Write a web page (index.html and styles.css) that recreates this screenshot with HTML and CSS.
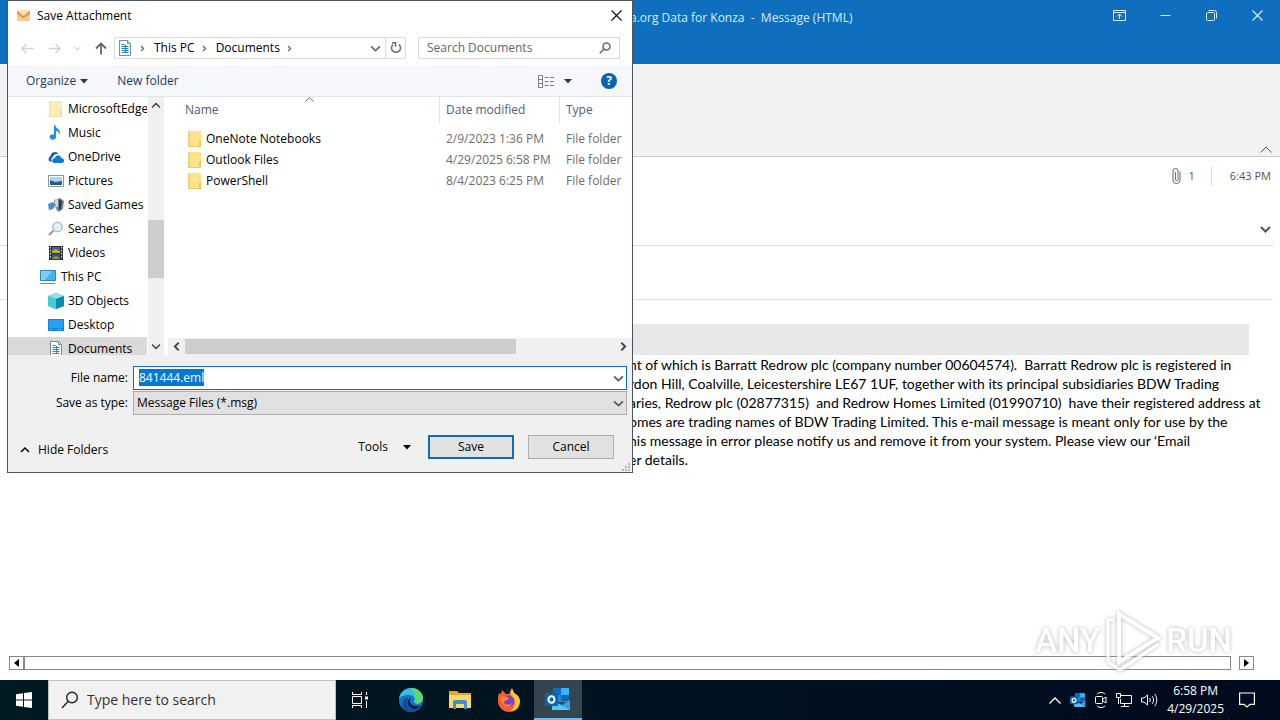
FILE: index.html
```html
<!DOCTYPE html>
<html lang="en">
<head>
<meta charset="utf-8">
<title>Save Attachment</title>
<link rel="stylesheet" href="styles.css">
</head>
<body class="desktop">
<svg class="defs" aria-hidden="true">
  <symbol id="folder" viewBox="0 0 16 16"><path d="M1 0h13v16H1z" fill="#ffe28c"/><path d="M1 0h2v16H1z" fill="#f5d27a"/><path d="M12 10l2-2v8h-2z" fill="#f0c75e"/><path d="M1 15h13v1H1z" fill="#ecc765"/></symbol>
  <symbol id="doc" viewBox="0 0 16 16"><path d="M2.500.5h8l3 3v12h-11z" fill="#fff" stroke="#7d8b96"/><path d="M10.500.5v3h3" fill="none" stroke="#7d8b96"/><path d="M4.500 4.500h3M4.500 6.500h7M4.500 8.500h7M4.500 10.500h7M4.500 12.500h7M8.500 5v8" stroke="#2587c9"/></symbol>
  <symbol id="down" viewBox="0 0 10 10"><path d="M1 3l4 4 4-4" fill="none" stroke="currentColor" stroke-width="1.500"/></symbol>
  <symbol id="up" viewBox="0 0 10 10"><path d="M1 7l4-4 4 4" fill="none" stroke="currentColor" stroke-width="1.500"/></symbol>
  <symbol id="left" viewBox="0 0 10 10"><path d="M7 1.500L3.500 5 7 8.500" fill="none" stroke="currentColor" stroke-width="1.800"/></symbol>
  <symbol id="right" viewBox="0 0 10 10"><path d="M3 1.500L6.500 5 3 8.500" fill="none" stroke="currentColor" stroke-width="1.800"/></symbol>
  <symbol id="caret" viewBox="0 0 10 10"><path d="M1 3h8L5 7.500z" fill="currentColor"/></symbol>
  <symbol id="outlook" viewBox="0 0 26 24"><path d="M8 1h16v14H8z" fill="#1490df"/><path d="M16 1h8v7h-8z" fill="#35b8f1"/><path d="M8 1h8v7H8z" fill="#0f6cbd"/><path d="M16 8h8v6h-8z" fill="#1066b5"/><path d="M7 14l10 4 8-5v10H7z" fill="#2ba5e6"/><path d="M7 13l18 10H7z" fill="#54c8f5"/><rect y="6" width="13" height="13" rx="1" fill="#0a64b4"/><ellipse cx="6.500" cy="12.500" rx="3" ry="3.300" fill="none" stroke="#fff" stroke-width="2"/></symbol>
</svg>

<main class="mail">
  <header class="mail-title">
    <h1 class="mail-subject">a.org Data for Konza&nbsp; -&nbsp; Message (HTML)</h1>
    <div class="window-buttons">
      <button class="window-button" aria-label="Ribbon display options"><svg width="13" height="11" viewBox="0 0 13 11" fill="none" stroke="#d5edff"><path d="M.5.5h12v10H.5zM.5 2.500h12M6.500 9V4M4 6.500L6.500 4 9 6.500"/></svg></button>
      <button class="window-button" aria-label="Minimize"><svg width="11" height="11" viewBox="0 0 11 11" stroke="#d5edff"><path d="M.5 5.500h10"/></svg></button>
      <button class="window-button" aria-label="Restore"><svg width="11" height="11" viewBox="0 0 11 11" fill="none" stroke="#d5edff"><rect x=".5" y="2.500" width="8" height="8" rx="1"/><path d="M2.500.5h6a2 2 0 012 2v6"/></svg></button>
      <button class="window-button" aria-label="Close window"><svg width="11" height="11" viewBox="0 0 11 11" stroke="#d5edff" stroke-width="1.200"><path d="M.5.5l10 10M10.500.5l-10 10"/></svg></button>
    </div>
  </header>
  <div class="ribbon"><button class="plain" aria-label="Collapse ribbon"><svg width="12" height="7" viewBox="0 0 12 7" fill="none" stroke="#555"><path d="M.5 6.500L6 1l5.500 5.500"/></svg></button></div>
  <section class="message-meta">
    <div class="meta-line">
      <svg width="9" height="16" viewBox="0 0 9 16" fill="none" stroke="#666"><path d="M8 3.500V12a3.500 3.500 0 01-7 0V3a2.500 2.500 0 015 0v8.500a1.300 1.300 0 01-2.600 0V4"/></svg>
      <span class="count">1</span><time class="time">6:43 PM</time>
    </div>
    <button class="plain" aria-label="Expand header"><svg width="11" height="8" viewBox="0 0 11 8" fill="none" stroke="#555" stroke-width="2"><path d="M1 1l4.500 4.500L10 1"/></svg></button>
  </section>
  <div class="attachment-strip"></div>
  <article class="message">
    <div class="banner"></div>
    <p class="message-text">nt of which is Barratt Redrow plc (company number 00604574).&nbsp; Barratt Redrow plc is registered in<br>rdon Hill, Coalville, Leicestershire LE67 1UF, together with its principal subsidiaries BDW Trading<br>aries, Redrow plc (02877315)&nbsp; and Redrow Homes Limited (01990710)&nbsp; have their registered address at<br>omes are trading names of BDW Trading Limited. This e-mail message is meant only for use by the<br>his message in error please notify us and remove it from your system. Please view our ‘Email<br>er details.</p>
  </article>
  <div class="mail-scroll">
    <button class="scroll-end" aria-label="Scroll left"><svg width="5" height="8" viewBox="0 0 5 8"><path d="M5 0v8L0 4z"/></svg></button>
    <div class="scroll-track"></div>
    <button class="scroll-end scroll-last" aria-label="Scroll right"><svg width="5" height="8" viewBox="0 0 5 8"><path d="M0 0v8l5-4z"/></svg></button>
  </div>
</main>

<div class="watermark" aria-label="ANY RUN">
  <span>ANY</span>
  <svg width="58" height="62" viewBox="0 0 58 62" fill="none" stroke="#fff" stroke-width="4"><path d="M15 4l39 24-39 24z"/><path d="M10 10H4v42l12 8 38-26" stroke-width="3"/></svg>
  <span>RUN</span>
</div>

<section class="dialog" role="dialog" aria-label="Save Attachment">
  <header class="dialog-title">
    <svg width="13" height="11" viewBox="0 0 13 11"><path d="M0 0h13v11H0z" fill="#f8cf92"/><path d="M0 1l6.500 5L13 1v3L6.500 8.500 0 4z" fill="#d99a55"/><path d="M0 0h13L6.500 5z" fill="#fbe0b4"/></svg>
    <h2 class="dialog-name">Save Attachment</h2>
    <button class="plain" aria-label="Close"><svg width="11" height="11" viewBox="0 0 11 11" stroke="#111" stroke-width="1.200"><path d="M.5.5l10 10M10.500.5l-10 10"/></svg></button>
  </header>

  <nav class="address-row">
    <div class="history">
      <button class="plain" aria-label="Back"><svg width="13" height="11" viewBox="0 0 13 11" fill="none" stroke="#d3d3d3" stroke-width="1.500"><path d="M12.500 5.500H1M5.500 1L1 5.500 5.500 10"/></svg></button>
      <button class="plain" aria-label="Forward"><svg width="13" height="11" viewBox="0 0 13 11" fill="none" stroke="#d3d3d3" stroke-width="1.500"><path d="M.5 5.500H12M7.500 1L12 5.500 7.500 10"/></svg></button>
      <button class="plain pale" aria-label="Recent locations"><svg width="7" height="7"><use href="#down"/></svg></button>
      <button class="plain" aria-label="Up one level"><svg width="12" height="13" viewBox="0 0 12 13" fill="none" stroke="#666" stroke-width="1.800"><path d="M6 12.500V1.500M1 6.500l5-5 5 5"/></svg></button>
    </div>
    <div class="address">
      <svg width="16" height="16"><use href="#doc"/></svg>
      <svg class="chevron" width="7" height="7"><use href="#right"/></svg>
      <a class="crumb" href="#">This PC</a>
      <svg class="chevron" width="7" height="7"><use href="#right"/></svg>
      <a class="crumb" href="#">Documents</a>
      <svg class="chevron" width="7" height="7"><use href="#right"/></svg>
      <button class="plain address-drop" aria-label="Previous locations"><svg width="11" height="11"><use href="#down"/></svg></button>
      <button class="refresh" aria-label="Refresh"><svg width="12" height="12" viewBox="0 0 12 12" fill="none" stroke="#666" stroke-width="1.500"><path d="M9 2.500A4.500 4.500 0 113 2.500M2 .8h3.500v4"/></svg></button>
    </div>
    <label class="search">
      <input class="search-input" type="text" placeholder="Search Documents" aria-label="Search Documents">
      <svg width="12" height="12" viewBox="0 0 12 12" fill="none" stroke="#666" stroke-width="1.500"><circle cx="7.500" cy="4.500" r="3.500"/><path d="M5 7L.8 11.200"/></svg>
    </label>
  </nav>

  <div class="toolbar">
    <button class="tool">Organize <svg width="10" height="10"><use href="#caret"/></svg></button>
    <button class="tool">New folder</button>
    <button class="tool view" aria-label="Change view"><svg width="17" height="13" viewBox="0 0 17 13" fill="none" stroke="#7b7f87"><path d="M.5.5h4v12h-4zM.5 4.500h4M.5 8.500h4M6.500 2.500h4M12 2.500h4M6.500 6.500h4M12 6.500h4M6.500 10.500h4M12 10.500h4"/></svg><svg width="10" height="10"><use href="#caret"/></svg></button>
    <button class="help" aria-label="Help">?</button>
  </div>

  <div class="panes">
    <ul class="tree">
      <li class="node"><svg class="faded" width="16" height="16"><use href="#folder"/></svg>MicrosoftEdge</li>
      <li class="node"><svg width="16" height="16" viewBox="0 0 16 16"><path d="M7 0c1 4 6 4 5 10-1-3-2-4-4-4v6a3.200 2.800 0 11-2-2.600V0z" fill="#1c8fe0"/></svg>Music</li>
      <li class="node"><svg width="16" height="16" viewBox="0 0 16 16"><path d="M1.500 12.500a3.500 3.500 0 011-5.500C3 2 9 2 11 5 7 4 5 7 5 8c-2 1-2 3-1 4.500z" fill="#0b63b5"/><path d="M6 14c-3-1-2-5 1-5 1-4 6-3 6 0 4 0 4 5 1 5z" fill="#1277cf"/></svg>OneDrive</li>
      <li class="node"><svg width="16" height="16" viewBox="0 0 16 16"><path d="M.5 2.500h15v11H.5z" fill="#fff" stroke="#8b959e"/><path d="M2 4h12v8H2z" fill="#a9d7f3"/><path d="M2 7l5 2 7-1v4H2z" fill="#285e87"/></svg>Pictures</li>
      <li class="node"><svg width="16" height="16" viewBox="0 0 16 16"><path d="M6 3l6-2 4 3-1 8-5 3-3-5z" fill="#7b858d"/><path d="M11 2l3 2-1 8-2 2z" fill="#30383f"/><path d="M7 3l3-1v7l-3 2z" fill="#d3dade"/><path d="M0 7l5-2 3 3-3 4-4 1z" fill="#4a8fc0"/></svg>Saved Games</li>
      <li class="node"><svg width="16" height="16" viewBox="0 0 16 16"><path d="M5.500 9.500L1 14" stroke="#9a938e" stroke-width="2"/><circle cx="9.500" cy="6" r="4.800" fill="#d7effc" stroke="#8daabd"/><path d="M7 5c1-2 3-2 4-1" fill="none" stroke="#fff"/></svg>Searches</li>
      <li class="node"><svg width="16" height="16" viewBox="0 0 16 16"><path d="M1 1h14v14H1z" fill="#333"/><path d="M4 2h8v5H4z" fill="#4858a5"/><path d="M4 9h8v5H4z" fill="#3c4b90"/><path d="M4 6l3-2 5 2v2H4z" fill="#a5b626"/><path d="M4 13l4-2 4 2v1H4z" fill="#8a9e2b"/><path d="M2.500 2v12M13.500 2v12" stroke="#ddd" stroke-dasharray="1.500"/></svg>Videos</li>
      <li class="node root"><svg width="18" height="16" viewBox="0 0 18 16"><path d="M1.500 1.500h15v10h-15z" fill="#42b4ef" stroke="#2a86bd"/><path d="M2 2h11L6 11H2z" fill="#76d0fa"/><path d="M1 14.500h15" stroke="#8b8b8b"/></svg>This PC</li>
      <li class="node"><svg width="16" height="16" viewBox="0 0 16 16"><path d="M8 0l8 3v10l-8 3-8-3V3z" fill="#1fb0c4"/><path d="M8 0l8 3-8 3-8-3z" fill="#8be6ec"/><path d="M0 3l8 3v10l-8-3z" fill="#45cbd8"/><path d="M8 6l8-3v10l-8 3z" fill="#0f8da8"/></svg>3D Objects</li>
      <li class="node"><svg width="16" height="16" viewBox="0 0 16 16"><path d="M0 2h16v12H0z" fill="#1583d8"/><path d="M1 3h14v8H1z" fill="#23a0f2"/><path d="M2 12.500h2M10 12.500h4" stroke="#bde4ff" stroke-dasharray="1"/></svg>Desktop</li>
      <li class="node selected"><svg width="16" height="16"><use href="#doc"/></svg>Documents</li>
    </ul>
    <div class="vscroll"><svg width="10" height="11"><use href="#up"/></svg><div class="vtrack"><div class="vthumb"></div></div><svg width="10" height="11"><use href="#down"/></svg></div>
    <div class="files">
      <table class="file-table">
        <colgroup><col><col class="col-date"><col class="col-type"></colgroup>
        <thead><tr><th>Name<svg class="sort" width="9" height="5" viewBox="0 0 9 5" fill="none" stroke="#777"><path d="M.5 4.500l4-4 4 4"/></svg></th><th>Date modified</th><th>Type</th></tr></thead>
        <tbody>
          <tr><td><span class="file"><svg width="16" height="16"><use href="#folder"/></svg>OneNote Notebooks</span></td><td>2/9/2023 1:36 PM</td><td>File folder</td></tr>
          <tr><td><span class="file"><svg width="16" height="16"><use href="#folder"/></svg>Outlook Files</span></td><td>4/29/2025 6:58 PM</td><td>File folder</td></tr>
          <tr><td><span class="file"><svg width="16" height="16"><use href="#folder"/></svg>PowerShell</span></td><td>8/4/2023 6:25 PM</td><td>File folder</td></tr>
        </tbody>
      </table>
      <div class="hscroll"><svg width="11" height="11"><use href="#left"/></svg><div class="htrack"><div class="hthumb"></div></div><svg width="11" height="11"><use href="#right"/></svg></div>
    </div>
  </div>

  <form class="dialog-form">
    <label class="field-label" for="filename">File name:</label>
    <div class="field"><input class="field-input" id="filename" type="text" value="841444.eml"><svg class="field-arrow" width="11" height="11"><use href="#down"/></svg></div>
    <label class="field-label" for="filetype">Save as type:</label>
    <div class="field"><select class="field-select" id="filetype"><option>Message Files (*.msg)</option></select><svg class="field-arrow" width="11" height="11"><use href="#down"/></svg></div>
  </form>
  <footer class="actions">
    <button class="hide-folders"><svg width="10" height="10"><use href="#up"/></svg>Hide Folders</button>
    <button class="tools">Tools <svg width="10" height="10"><use href="#caret"/></svg></button>
    <button class="push primary">Save</button>
    <button class="push">Cancel</button>
  </footer>
  <svg class="grip" width="10" height="10" viewBox="0 0 10 10" fill="#b5b5b5"><path d="M7 1h2v2H7zM4 4h2v2H4zM7 4h2v2H7zM1 7h2v2H1zM4 7h2v2H4zM7 7h2v2H7z"/></svg>
</section>

<footer class="taskbar">
  <button class="start" aria-label="Start"><svg width="16" height="16" viewBox="0 0 16 16" fill="#fff"><path d="M0 2.200l7-1v6.300H0zM8 1l8-1v7.500H8zM0 8.500h7v6.300l-7-1zM8 8.500h8V16l-8-1z"/></svg></button>
  <label class="task-search"><svg width="18" height="18" viewBox="0 0 18 18" fill="none" stroke="#222" stroke-width="1.400"><circle cx="11" cy="6.500" r="5.300"/><path d="M7 10.500L1 17"/></svg><input class="task-input" type="text" placeholder="Type here to search" aria-label="Type here to search"></label>
  <button class="task" aria-label="Task view"><svg width="18" height="16" viewBox="0 0 18 16" fill="none" stroke="#fff"><path d="M1.500 0v2.500h9V0M1.500 16v-2.500h9V16M1.500 4.500h9v7h-9zM15.500 0v3M15.500 9v7"/><path d="M14 4.500h3v3h-3z" fill="#fff" stroke="none"/></svg></button>
  <div class="pinned">
    <button class="task" aria-label="Edge"><svg width="24" height="24" viewBox="0 0 24 24"><circle cx="12" cy="12" r="12" fill="#1672c9"/><path d="M0 11C1 4 6 0 12 0c7 0 12 5 12 10 0 6-7 7-9 4 2-4-1-7-5-7-5 0-9 2-10 4z" fill="#35bce0"/><path d="M12 0c7 0 12 5 12 10 0 6-7 7-9 4 3-5 0-9-3-14z" fill="#5bd675"/><path d="M8 15c0 4 4 7 9 6 2 0 4-1 5-2-3 5-10 6-15 4-5-3-5-12 3-14-2 2-2 4-2 6z" fill="#0c4e9e"/><path d="M12 10c-3 3 0 8 5 8 2 0 4 0 5-1-2 4-7 5-10 3-5-3-4-9 0-10z" fill="#081e3b"/></svg></button>
    <button class="task" aria-label="File Explorer"><svg width="22" height="20" viewBox="0 0 22 20"><path d="M0 1h8l2 2h12v15H0z" fill="#e9a52a"/><path d="M0 5h22v13H0z" fill="#ffd966"/><path d="M4 12a2 2 0 012-2h10a2 2 0 012 2v7h-3v-5H7v5H4z" fill="#3d91cf"/></svg></button>
    <button class="task" aria-label="Firefox"><svg width="24" height="24" viewBox="0 0 24 24"><path d="M2 5l2 1 1-4 4 4 3 0c1-2 2-4 3-5l2 4c4 2 6 5 6 9 0 6-5 10-11 10S1 19 1 13c0-3 0-6 1-8z" fill="#ff5a36"/><path d="M15 0l2 5c6 3 7 8 5 12-1 4-5 6-9 6 5-3 7-9 2-14-2-3-2-6 0-9z" fill="#ffc928"/><circle cx="12" cy="13" r="5.500" fill="#7a3fd4"/><path d="M4 9c3-2 5 0 8 1-1 3-5 2-5 4 0 3 5 4 8 1-1 5-10 6-11-6z" fill="#ff8c1f"/></svg></button>
    <button class="task active" aria-label="Outlook"><svg width="26" height="24"><use href="#outlook"/></svg></button>
  </div>
  <div class="tray">
    <svg width="12" height="7" viewBox="0 0 12 7" fill="none" stroke="#fff" stroke-width="1.300"><path d="M.5 6.500L6 1l5.500 5.500"/></svg>
    <svg width="16" height="16"><use href="#outlook"/></svg>
    <svg width="12" height="16" viewBox="0 0 12 16" fill="none" stroke="#fff"><rect x=".5" y="4.500" width="7" height="7" rx="1"/><path d="M8 7l3-2v6L8 9M2 2c2-2 6-2 8 0M2 14c2 2 6 2 8 0"/></svg>
    <svg width="16" height="14" viewBox="0 0 16 14" fill="none" stroke="#fff"><path d="M5 2.500h10.500v8h-11V6M8.500 11v2.500M5 13.500h8M.5.5h4v4h-4zM2.500 5v6"/></svg>
    <svg width="17" height="14" viewBox="0 0 17 14" fill="none" stroke="#fff"><path d="M.5 5h2.500L6.500 2v10L3 9H.5zM8.500 5c1 1 1 3 0 4M11 3c2 2 2 6 0 8M13.500 1c3 3 3 9 0 12"/></svg>
    <div class="clock"><time>6:58 PM</time><time>4/29/2025</time></div>
    <svg width="16" height="16" viewBox="0 0 16 16" fill="none" stroke="#fff" stroke-width="1.200"><path d="M.6 1h14.800v11.400H11L8 15l-3-2.600H.6z"/></svg>
  </div>
</footer>
<script>
  document.getElementById("filename").focus();
  document.getElementById("filename").select();
</script>
</body>
</html>
```
FILE: styles.css
```css
* { box-sizing: border-box; }
body, h1, h2, p, ul { margin: 0; padding: 0; }
button, input, select { font: inherit; color: inherit; }
button { padding: 0; border: 0; background: none; }
svg { display: block; flex: none; }
.defs { position: absolute; width: 0; height: 0; }

.desktop {
  display: flex;
  flex-direction: column;
  height: 100vh;
  overflow: hidden;
  position: relative;
  font: 12px/16px "Open Sans", "Noto Sans", sans-serif;
  color: #000;
  background: #fff;
}
.plain { display: flex; align-items: center; justify-content: center; }

/* Message window */
.mail { flex: 1; display: flex; flex-direction: column; min-height: 0; }
.mail-title {
  display: flex;
  justify-content: space-between;
  height: 64px;
  padding-left: 630px;
  background: #106ebe;
  color: #d5edff;
}
.mail-subject { padding-top: 10px; font-size: 12px; font-weight: 400; white-space: nowrap; }
.window-buttons { display: flex; height: 30px; }
.window-button { display: flex; align-items: center; justify-content: center; width: 46px; }
.ribbon {
  display: flex;
  align-items: flex-end;
  justify-content: flex-end;
  height: 93px;
  padding: 3px 8px;
  background: #f2f2f2;
  border-bottom: 1px solid #c8c8c8;
}
.message-meta {
  display: flex;
  flex-direction: column;
  align-items: flex-end;
  gap: 40px;
  height: 89px;
  margin-right: 7px;
  padding: 9px 2px 0 0;
  border-bottom: 1px solid #dcdcdc;
}
.meta-line { display: flex; align-items: center; gap: 8px; font-size: 11px; line-height: 20px; color: #555; }
.time { margin-left: 8px; padding-left: 18px; border-left: 1px solid #dcdcdc; }
.attachment-strip { height: 54px; margin-right: 7px; border-bottom: 1px solid #dcdcdc; }
.message { flex: 1; padding: 24px 31px 0 9px; }
.banner { height: 31px; background: #e8e8e8; }
.message-text {
  padding-left: 620px;
  font: 14px/19px Lato, "Open Sans", sans-serif;
  white-space: nowrap;
}
.mail-scroll { display: flex; height: 14px; margin: 0 26px 10px 9px; }
.scroll-end { display: flex; align-items: center; justify-content: center; width: 15px; border: 1px solid #888; background: #fff; }
.scroll-track { flex: 1; border: 1px solid #888; background: #fff; }
.scroll-last { margin-left: 8px; }

.watermark {
  position: absolute;
  right: 48px;
  bottom: 48px;
  display: flex;
  align-items: center;
  gap: 4px;
  font: 500 33px/60px Roboto, sans-serif;
  color: #fff;
  opacity: 0.85;
  filter: drop-shadow(0 0 2px #aaa);
}

/* Save dialog */
.dialog {
  position: absolute;
  left: 7px;
  top: 0;
  width: 626px;
  display: flex;
  flex-direction: column;
  border: 1px solid #4c545c;
  background: #fff;
}
.dialog-title { display: flex; align-items: center; gap: 7px; height: 29px; padding: 0 10px 0 9px; }
.dialog-name { flex: 1; font-size: 12px; font-weight: 400; }
.address-row { display: flex; align-items: center; height: 36px; padding: 0 12px 0 13px; }
.history { display: flex; align-items: center; justify-content: space-between; width: 86px; }
.pale { color: #d3d3d3; }
.address {
  display: flex;
  flex: 1;
  align-items: center;
  height: 22px;
  margin-left: 7px;
  padding-left: 2px;
  border: 1px solid #d9d9d9;
}
.chevron { margin: 0 8px 0 6px; color: #666; }
.crumb { color: inherit; text-decoration: none; }
.address-drop { margin-left: auto; padding: 0 4px; color: #666; }
.refresh { display: flex; align-items: center; justify-content: center; width: 20px; height: 20px; border-left: 1px solid #d9d9d9; }
.search {
  display: flex;
  align-items: center;
  width: 202px;
  height: 22px;
  margin-left: 12px;
  padding: 0 8px;
  border: 1px solid #d9d9d9;
}
.search-input, .task-input { flex: 1; min-width: 0; padding: 0; border: 0; outline: 0; background: none; }
.search-input::placeholder { color: #666; }
.toolbar {
  display: flex;
  align-items: center;
  gap: 28px;
  height: 31px;
  padding: 0 15px 0 18px;
  background: #f5f7fa;
  border-bottom: 1px solid #e2e6ea;
  color: #1e395b;
}
.tool { display: flex; align-items: center; gap: 3px; }
.view { gap: 8px; margin-left: auto; }
.help { width: 16px; height: 16px; border-radius: 8px; background: #0a63b8; color: #fff; font-weight: 700; line-height: 16px; }

.panes { display: flex; height: 258px; overflow: hidden; }
.tree { width: 139px; list-style: none; overflow: hidden; white-space: nowrap; }
.node { display: flex; align-items: center; gap: 4px; height: 24px; padding-left: 40px; }
.root { padding-left: 31px; }
.selected { background: #d9d9d9; }
.faded { opacity: 0.6; }
.vscroll {
  display: flex;
  flex-direction: column;
  align-items: center;
  width: 16px;
  margin-left: 1px;
  padding: 3px 0;
  background: #f0f0f0;
  color: #444;
}
.vtrack { flex: 1; width: 100%; padding-top: 109px; }
.vthumb { height: 58px; background: #cdcdcd; }
.files { display: flex; flex: 1; flex-direction: column; padding-left: 4px; }
.file-table { width: 100%; table-layout: fixed; border-collapse: separate; border-spacing: 0; }
.col-date { width: 120px; }
.col-type { width: 72px; }
th { position: relative; height: 26px; padding: 0 6px; border-right: 1px solid #e2e2e2; font-weight: 400; text-align: left; color: #4c607a; }
th:first-child { padding-left: 17px; }
th:last-child { border-right: 0; }
.sort { position: absolute; left: 137px; top: 0; }
td { height: 21px; padding: 0 6px; color: #6d6d6d; white-space: nowrap; }
td:first-child { padding-left: 19px; color: #000; }
tbody::before { content: ""; display: block; height: 5px; }
.file { display: flex; align-items: center; gap: 3px; }
.hscroll { display: flex; align-items: center; height: 17px; margin-top: auto; padding: 0 3px; background: #f0f0f0; color: #444; }
.htrack { flex: 1; padding: 0 102px 0 3px; }
.hthumb { height: 15px; background: #cdcdcd; }

.dialog-form {
  display: grid;
  grid-template-columns: 120px 1fr;
  column-gap: 5px;
  row-gap: 1px;
  align-items: center;
  padding: 11px 5px 0 0;
  background: #f0f0f0;
}
.field-label { text-align: right; }
.field { position: relative; height: 24px; }
.field-input, .field-select { width: 100%; height: 24px; border: 1px solid #adadad; border-radius: 0; outline: 0; }
.field-input { padding: 0 24px 2px 5px; border-color: #0f6cbd; background: #fff; }
.field-input::selection { background: #0078d7; color: #fff; }
.field-select { padding: 0 3px; appearance: none; background: #e1e1e1; }
.field-arrow { position: absolute; right: 3px; top: 7px; color: #555; pointer-events: none; }
.actions { display: flex; align-items: center; height: 57px; padding: 7px 18px 0 12px; background: #f0f0f0; }
.hide-folders { display: flex; align-items: center; gap: 8px; padding-top: 5px; }
.tools { display: flex; align-items: center; gap: 14px; margin: 0 16px 0 auto; }
.push { width: 86px; height: 24px; border: 1px solid #adadad; background: #e1e1e1; }
.primary { margin-right: 14px; border: 2px solid #0f6cbd; }
.grip { position: absolute; right: 1px; bottom: 0; }

/* Taskbar */
.taskbar { display: flex; height: 40px; background: linear-gradient(90deg, #001a22, #000b1e); color: #fff; }
.start { display: flex; align-items: center; justify-content: center; width: 48px; }
.task-search {
  display: flex;
  align-items: center;
  gap: 8px;
  width: 288px;
  padding: 0 12px;
  border: 1px solid #bdbdbd;
  background: #f1f1f1;
  font-size: 14px;
  line-height: 20px;
}
.task-input::placeholder { color: #333; }
.task { display: flex; align-items: center; justify-content: center; width: 48px; }
.pinned { display: flex; gap: 1px; margin-left: 3px; }
.active { background: #34454e; border-bottom: 2px solid #76b9ed; }
.tray { display: flex; align-items: center; gap: 9px; margin-left: auto; padding-right: 25px; }
.clock { display: flex; flex-direction: column; line-height: 18px; text-align: center; }
.clock + svg { margin-left: 6px; }
```
